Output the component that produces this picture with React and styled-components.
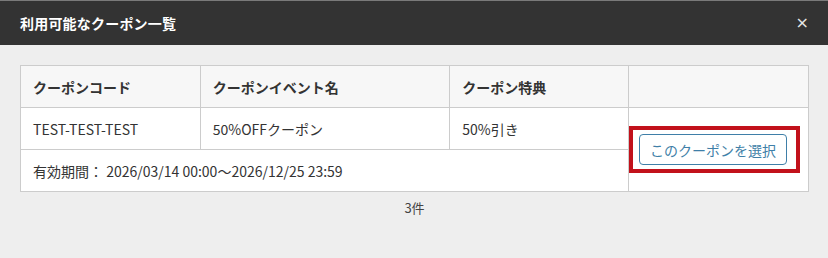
import React from 'react';
import styled, { createGlobalStyle } from 'styled-components';

const GlobalStyle = createGlobalStyle`
  html, body {
    margin: 0;
    padding: 0;
    background: #eeeeee;
  }
  body {
    font-family: "Noto Sans CJK JP", "Noto Sans", sans-serif;
    color: #333;
  }
`;

const Modal = styled.div`
  width: 828px;
  height: 258px;
  background: #eeeeee;
  border-top: 1px solid #7a7a7a;
  box-sizing: border-box;
`;

const Header = styled.div`
  display: flex;
  align-items: center;
  justify-content: space-between;
  height: 44px;
  padding: 0 20px;
  background: #333333;
`;

const Title = styled.h2`
  margin: 0;
  font-size: 14px;
  font-weight: 700;
  color: #ffffff;
  letter-spacing: 0.2px;
`;

const CloseButton = styled.button`
  border: none;
  background: transparent;
  color: #e6e6e6;
  font-size: 16px;
  line-height: 1;
  padding: 0;
  margin-right: -1px;
  font-family: "DejaVu Sans", sans-serif;
  cursor: pointer;
`;

const Body = styled.div`
  padding: 20px 19px 0 20px;
`;

const Table = styled.table`
  width: 789px;
  border-collapse: collapse;
  background: #ffffff;
  font-size: 14px;
  color: #333;
`;

const Th = styled.th`
  height: 42px;
  padding: 0 12px;
  background: #f7f7f7;
  border: 1px solid #cccccc;
  text-align: left;
  font-weight: 700;
  box-sizing: border-box;
  width: ${(p) => p.$width}px;
`;

const Td = styled.td`
  height: 42px;
  padding: 0 12px;
  border: 1px solid #cccccc;
  text-align: left;
  vertical-align: middle;
  box-sizing: border-box;
`;

const ActionCell = styled(Td)`
  padding: 0 0 0 10px;
`;

const Highlight = styled.span`
  position: relative;
  display: inline-block;
  &::after {
    content: '';
    position: absolute;
    left: -10px;
    right: -13px;
    top: -8px;
    bottom: -8px;
    border: 4px solid #c2111b;
    pointer-events: none;
  }
`;

const SelectButton = styled.button`
  display: block;
  width: 148px;
  height: 31px;
  border: 1px solid #3f7fa8;
  border-radius: 4px;
  background: #ffffff;
  color: #3f7fa8;
  font-family: inherit;
  font-size: 14px;
  cursor: pointer;
  padding: 0;
`;

const Count = styled.div`
  text-align: center;
  font-size: 13px;
  color: #444;
  padding-top: 6px;
  width: 789px;
`;

const columns = [
  { label: 'クーポンコード', width: 180 },
  { label: 'クーポンイベント名', width: 250 },
  { label: 'クーポン特典', width: 179 },
  { label: '', width: 180 },
];

const coupon = {
  code: 'TEST-TEST-TEST',
  name: '50%OFFクーポン',
  benefit: '50%引き',
  period: '2026/03/14 00:00～2026/12/25 23:59',
};

const App = () => (
  <>
    <GlobalStyle />
    <Modal>
      <Header>
        <Title>利用可能なクーポン一覧</Title>
        <CloseButton aria-label="閉じる">×</CloseButton>
      </Header>
      <Body>
        <Table>
          <thead>
            <tr>
              {columns.map((col) => (
                <Th key={col.width + col.label} $width={col.width}>
                  {col.label}
                </Th>
              ))}
            </tr>
          </thead>
          <tbody>
            <tr>
              <Td>{coupon.code}</Td>
              <Td>{coupon.name}</Td>
              <Td>{coupon.benefit}</Td>
              <ActionCell rowSpan={2}>
                <Highlight>
                  <SelectButton>このクーポンを選択</SelectButton>
                </Highlight>
              </ActionCell>
            </tr>
            <tr>
              <Td colSpan={3}>有効期間： {coupon.period}</Td>
            </tr>
          </tbody>
        </Table>
        <Count>3件</Count>
      </Body>
    </Modal>
  </>
);

export default App;
